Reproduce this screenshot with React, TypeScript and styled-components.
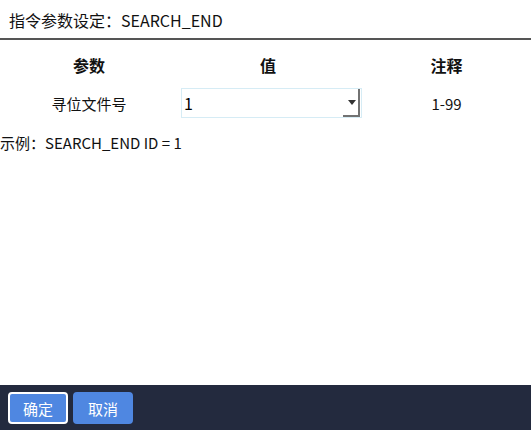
import React from 'react';
import styled, { createGlobalStyle } from 'styled-components';

const GlobalStyle = createGlobalStyle`
  html, body {
    margin: 0;
    padding: 0;
    background: #fff;
  }
  body {
    font-family: "Noto Sans CJK SC", "Noto Sans", sans-serif;
    color: #111;
  }
`;

const params = [{ name: '寻位文件号', value: '1', note: '1-99' }];

const App: React.FC = (): JSX.Element => {
  return (
    <Page>
      <GlobalStyle />
      <Title>指令参数设定：SEARCH_END</Title>
      <Content>
        <ParamTable>
          <HeadCell>参数</HeadCell>
          <HeadCell>值</HeadCell>
          <HeadCell>注释</HeadCell>
          {params.map(p => (
            <React.Fragment key={p.name}>
              <Cell>{p.name}</Cell>
              <Cell>
                <SelectBox>
                  <SelectValue>{p.value}</SelectValue>
                  <ArrowButton>
                    <Triangle />
                  </ArrowButton>
                </SelectBox>
              </Cell>
              <Cell>{p.note}</Cell>
            </React.Fragment>
          ))}
        </ParamTable>
        <Example>示例：SEARCH_END ID = 1</Example>
      </Content>
      <Footer>
        <FooterButton focused>确定</FooterButton>
        <FooterButton>取消</FooterButton>
      </Footer>
    </Page>
  );
};
export default App;

const Page = styled.div`
  width: 531px;
  height: 430px;
  display: flex;
  flex-direction: column;
`;

const Title = styled.div`
  height: 40px;
  line-height: 40px;
  padding-left: 9px;
  font-size: 16px;
  border-bottom: 2px solid #555;
  box-sizing: border-box;
`;

const Content = styled.div`
  flex: 1;
`;

const ParamTable = styled.div`
  display: grid;
  grid-template-columns: 178px 184px 1fr;
  grid-template-rows: 30px 30px;
  row-gap: 8px;
  margin-top: 10px;
`;

const HeadCell = styled.div`
  display: flex;
  align-items: center;
  justify-content: center;
  font-size: 16px;
  font-weight: bold;
  &:nth-child(2) {
    justify-content: flex-start;
    padding-left: 82px;
  }
`;

const Cell = styled.div`
  display: flex;
  align-items: center;
  justify-content: center;
  font-size: 15px;
  &:nth-child(5) {
    justify-content: flex-start;
    padding-left: 3px;
  }
`;

const SelectBox = styled.div`
  width: 181px;
  height: 30px;
  box-sizing: border-box;
  border: 1px solid #d6ecf5;
  display: flex;
  align-items: stretch;
  background: #fff;
`;

const SelectValue = styled.div`
  flex: 1;
  padding-left: 2px;
  font-size: 16px;
  line-height: 28px;
  color: #000;
`;

const ArrowButton = styled.div`
  width: 17px;
  box-sizing: border-box;
  border-right: 2px solid #727272;
  border-bottom: 2px solid #727272;
  display: flex;
  align-items: center;
  justify-content: center;
  padding-left: 3px;
  margin-right: 1px;
`;

const Triangle = styled.div`
  width: 0;
  height: 0;
  border-left: 4px solid transparent;
  border-right: 4px solid transparent;
  border-top: 5px solid #333;
  margin-top: 1px;
`;

const Example = styled.div`
  margin-top: 15px;
  font-size: 15px;
  line-height: 20px;
`;

const Footer = styled.div`
  height: 45px;
  background: #232a3e;
  display: flex;
  align-items: center;
  gap: 5px;
  padding-left: 8px;
`;

const FooterButton = styled.button<{ focused?: boolean }>`
  width: 60px;
  height: 32px;
  box-sizing: border-box;
  border: 2px solid ${p => (p.focused ? '#fff' : '#4f87e1')};
  border-radius: 4px;
  background: #4f87e1;
  color: #fff;
  font-family: "Noto Sans CJK SC", "Noto Sans", sans-serif;
  font-size: 15px;
  padding: 0;
  margin-top: 1px;
`;
